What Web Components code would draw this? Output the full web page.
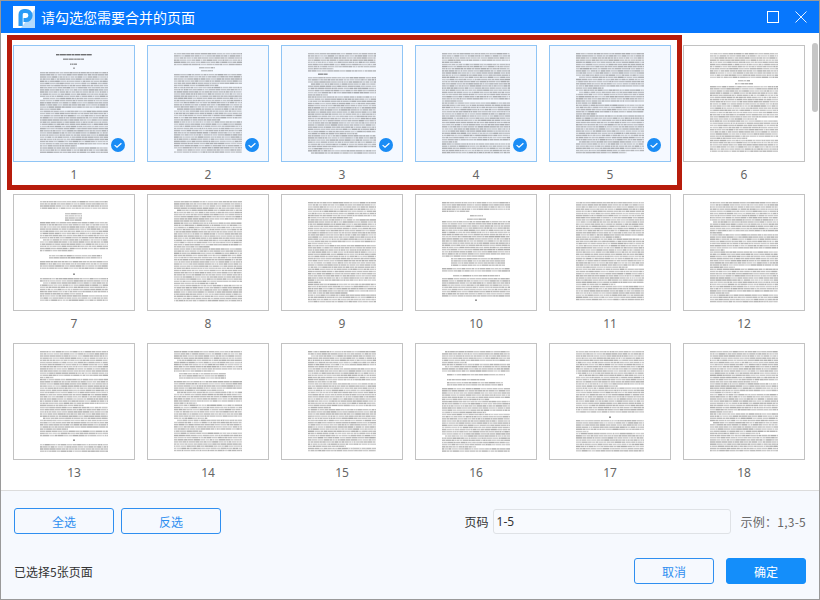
<!DOCTYPE html>
<html>
<head>
<meta charset="utf-8">
<title>merge pages</title>
<style>
  html, body { margin: 0; padding: 0; background: #fff; }
  body { font-family: "Noto Sans CJK SC", "Liberation Sans", sans-serif; font-size: 12px; }
</style>
</head>
<body>
<merge-window>
  <title-bar slot="top">请勾选您需要合并的页面</title-bar>
  <page-grid slot="main">
    <page-thumb num="1" selected blocks="9,10.5,43,79,.75 13.5,15,50,71,.55 18.5,20,57,64,.55 22.5,24,60,62,.45 27,108"></page-thumb>
    <page-thumb num="2" selected blocks="8,20 22,23.5,52,68 25,26.5,54,66 29,108"></page-thumb>
    <page-thumb num="3" selected blocks="8,26 28.5,30,37,47,.55 32,108"></page-thumb>
    <page-thumb num="4" selected blocks="8,108"></page-thumb>
    <page-thumb num="5" selected blocks="8,108"></page-thumb>
    <page-thumb num="6" blocks="8,33 35,36.5,55,67 38,39.5,52,70 41,108"></page-thumb>
    <page-thumb num="7" blocks="7,16 19,26,52,69 28,58 61,64,36,89 67,74 79.5,81,60,62,.6 84,108"></page-thumb>
    <page-thumb num="8" blocks="7,108"></page-thumb>
    <page-thumb num="9" blocks="8,108"></page-thumb>
    <page-thumb num="10" blocks="8,18 21,22.5,55,68 24.5,26,52,71 27,62 64,72,36,90 74,77 81,82.5,38,85 84,102 105.5,107,60,62,.6"></page-thumb>
    <page-thumb num="11" blocks="8,107"></page-thumb>
    <page-thumb num="12" blocks="8,108"></page-thumb>
    <page-thumb num="13" blocks="8,93 96.5,98,60,62,.6 101,108"></page-thumb>
    <page-thumb num="14" blocks="8,28 30,36,32,79 38,108"></page-thumb>
    <page-thumb num="15" blocks="8,108"></page-thumb>
    <page-thumb num="16" blocks="8,28 31,33,32,90 36,37.5,32,70 39,43,32,88 45,108"></page-thumb>
    <page-thumb num="17" blocks="8,69 73.5,75,60,62,.6 77,108"></page-thumb>
    <page-thumb num="18" blocks="8,108"></page-thumb>
  </page-grid>
  <foot-bar slot="bottom" value="1-5" status="已选择5张页面"></foot-bar>
</merge-window>

<script>
// outer frame
class MergeWindow extends HTMLElement {
  constructor() {
    super();
    this.attachShadow({ mode: "open" }).innerHTML = `
      <style>
        :host { display: flex; flex-direction: column; box-sizing: border-box; width: 820px; height: 600px;
                border: 1px solid #9a9a9a; background: #fff; overflow: hidden; }
        .main { flex: 1; min-height: 0; }
      </style>
      <slot name="top"></slot>
      <div class="main"><slot name="main"></slot></div>
      <slot name="bottom"></slot>`;
  }
}
customElements.define("merge-window", MergeWindow);

class TitleBar extends HTMLElement {
  constructor() {
    super();
    this.attachShadow({ mode: "open" }).innerHTML = `
      <style>
        :host { display: flex; align-items: center; height: 32px; background: #0777fd; color: #fff;
                font-size: 14px; padding: 0 12px; box-sizing: border-box; flex: none; }
        .logo { width: 22px; height: 22px; margin-right: 6px; flex: none; }
        .txt { flex: 1; line-height: 32px; }
        .btn { width: 12px; height: 12px; display: block; }
        .max { margin-right: 16px; }
      </style>
      <svg class="logo" viewBox="0 0 22 22">
        <rect width="22" height="22" fill="#fff"/>
        <path d="M22 3V22H8Z" fill="#b4dafc"/>
        <path d="M7.6 20V8.5A3.5 3.5 0 0 1 11 5H13A4.5 4.5 0 0 1 13 14H10.5" fill="none" stroke="#2a9bf7" stroke-width="4.2"/>
      </svg>
      <span class="txt"><slot></slot></span>
      <svg class="btn max" viewBox="0 0 12 12"><rect x=".5" y=".5" width="11" height="11" fill="none" stroke="#fff"/></svg>
      <svg class="btn" viewBox="0 0 12 12"><path d="M.5 .5L11.5 11.5M11.5 .5L.5 11.5" stroke="#fff" stroke-width=".9" fill="none"/></svg>`;
  }
}
customElements.define("title-bar", TitleBar);

class PageGrid extends HTMLElement {
  constructor() {
    super();
    this.attachShadow({ mode: "open" }).innerHTML = `
      <style>
        :host { display: block; position: relative; height: 457px; overflow: hidden; background: #fff; }
        .grid { display: grid; grid-template-columns: repeat(6, 122px); column-gap: 12px; row-gap: 0;
                grid-auto-rows: 149px; padding: 12px 0 0 12px; }
        /* red mark round the selected row */
        .mark { position: absolute; left: 6px; top: 2px; width: 675px; height: 155px; box-sizing: border-box;
                border: 5px solid #b71c0c; pointer-events: none; }
        .bar { position: absolute; left: 811px; top: 10px; width: 6px; height: 69px; border-radius: 3px; background: #c6c6c6; }
      </style>
      <div class="grid"><slot></slot></div>
      <div class="mark"></div>
      <div class="bar"></div>`;
  }
}
customElements.define("page-grid", PageGrid);

// small prng so every thumb keeps the same fake text
function rng(seed) {
  let s = seed * 9301 + 49297;
  return () => { s = (s * 9301 + 49297) % 233280; return s / 233280; };
}

function pageLines(blocks, seed) {
  const r = rng(seed);
  let out = "";
  blocks.split(" ").forEach(b => {
    const p = b.split(",").map(Number);
    const y0 = p[0], y1 = p[1], x0 = p.length > 2 ? p[2] : 27, x1 = p.length > 2 ? p[3] : 95;
    const op = p[4];
    let toEnd = 4 + Math.floor(r() * 14);
    const pitch = y1 - y0 < 2 ? 2 : 2.15;
    for (let y = y0; y < y1 - .4; y += pitch) {
      let x = x0, end = x1;
      if (p.length <= 2) {
        if (toEnd === 0) { end = x0 + 12 + r() * 40; toEnd = 5 + Math.floor(r() * 16); }
        else if (toEnd === 5 && r() < .3) x = x0 + 3;
        toEnd--;
      }
      while (x < end) {
        const w = Math.min(1.5 + r() * 5, end - x);
        const o = op || (.26 + r() * .16).toFixed(2);
        out += `<rect x="${x.toFixed(1)}" y="${y.toFixed(1)}" width="${w.toFixed(1)}" height="1.4" opacity="${o}"/>`;
        x += w + .4;
      }
    }
  });
  return out;
}

class PageThumb extends HTMLElement {
  connectedCallback() {
    if (this.shadowRoot) return;
    const num = this.getAttribute("num");
    const sel = this.hasAttribute("selected");
    this.attachShadow({ mode: "open" }).innerHTML = `
      <style>
        :host { display: flex; flex-direction: column; align-items: center; width: 122px; color: #666; }
        .sheet { position: relative; box-sizing: border-box; width: 122px; height: 117px; flex: none;
                 border: 1px solid ${sel ? "#90c5f5" : "#c2c2c2"}; background: ${sel ? "#f5f9ff" : "#fff"}; }
        .sheet > svg.txt { position: absolute; left: -1px; top: -1px; width: 122px; height: 117px; }
        .check { position: absolute; right: 9px; bottom: 9px; width: 14px; height: 14px; }
        .num { font-family: "Noto Sans", "Liberation Sans", sans-serif; font-size: 12px; line-height: 16px; margin-top: 5px; }
      </style>
      <div class="sheet">
        <svg class="txt" viewBox="0 0 122 117">
          <defs><filter id="b" x="-5%" y="-5%" width="110%" height="110%"><feGaussianBlur stdDeviation=".5"/></filter></defs>
          <g fill="#444" filter="url(#b)">${pageLines(this.getAttribute("blocks"), Number(num))}</g>
        </svg>
        ${sel ? `<svg class="check" viewBox="0 0 14 14"><circle cx="7" cy="7" r="7" fill="#1a8cf5"/><path d="M3.6 7.1L6 9.2L10.4 5.2" fill="none" stroke="#fff" stroke-width="1.2"/></svg>` : ""}
      </div>
      <div class="num">${num}</div>`;
  }
}
customElements.define("page-thumb", PageThumb);

class UiButton extends HTMLElement {
  constructor() {
    super();
    this.attachShadow({ mode: "open" }).innerHTML = `
      <style>
        :host { display: inline-flex; align-items: center; justify-content: center; box-sizing: border-box;
                height: 26px; border-radius: 3px; border: 1px solid #2f8ff0; color: #2f8ff0;
                font-size: 12px; width: var(--w, 100px); background: transparent; }
        :host([primary]) { background: #148efa; border-color: #148efa; color: #fff; }
      </style>
      <slot></slot>`;
  }
}
customElements.define("ui-button", UiButton);

class FootBar extends HTMLElement {
  connectedCallback() {
    if (this.shadowRoot) return;
    this.attachShadow({ mode: "open" }).innerHTML = `
      <style>
        :host { display: flex; flex-direction: column; flex: none; box-sizing: border-box; height: 109px;
                padding: 17px 13px 0; background: #f6f9fe; border-top: 1px solid #dcdcdc; color: #333; font-size: 12px; }
        .row { display: flex; align-items: center; height: 26px; }
        .row.two { margin-top: 24px; }
        .btns { display: flex; gap: 7px; }
        .right { margin-left: auto; display: flex; align-items: center; }
        .fill { flex: 1; }
        .field { box-sizing: border-box; width: 238px; height: 25px; margin: 0 10px 0 4px; border: 1px solid #dfe2e6;
                 border-radius: 3px; line-height: 23px; padding-left: 3px; font-size: 12px; color: #333; background: #f8fafe;
                 font-family: "Noto Sans", "Liberation Sans", sans-serif; }
        .hint { color: #666; letter-spacing: .25px; }
        .cancel { margin-right: 12px; }
      </style>
      <div class="row">
        <div class="btns"><ui-button>全选</ui-button><ui-button>反选</ui-button></div>
        <div class="right"><span>页码</span><div class="field">${this.getAttribute("value")}</div><span class="hint">示例：1,3-5</span></div>
      </div>
      <div class="row two">
        <span>${this.getAttribute("status")}</span>
        <span class="fill"></span>
        <ui-button class="cancel" style="--w:80px">取消</ui-button>
        <ui-button primary style="--w:80px">确定</ui-button>
      </div>`;
  }
}
customElements.define("foot-bar", FootBar);
</script>
</body>
</html>
